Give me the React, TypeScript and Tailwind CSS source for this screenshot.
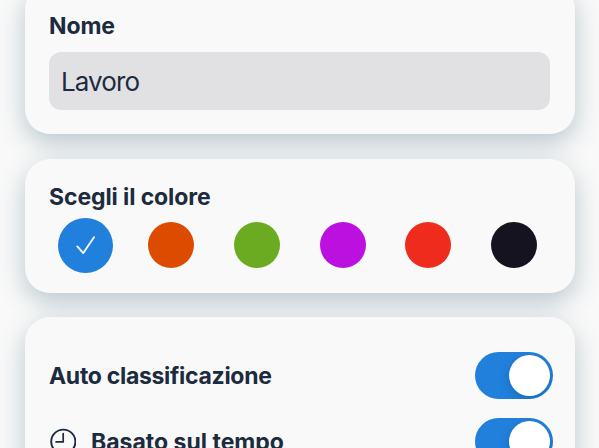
import React from 'react';

interface CardProps {
    className: string;
    children: React.ReactNode;
}

const Card: React.FC<CardProps> = ({ className, children }) => (
    <section
        className={`w-[550px] shrink-0 rounded-[25px] bg-[#f9f9f9] pr-6 pl-[24.5px] shadow-[0_9px_26px_rgba(40,82,102,0.3)] ${className}`}
    >
        {children}
    </section>
);

const Toggle: React.FC<{ label: string }> = ({ label }) => (
    <button
        role="switch"
        aria-checked="true"
        aria-label={label}
        className="flex h-[47px] w-[78px] shrink-0 items-center justify-end overflow-hidden rounded-full bg-[#2080dc] pr-[3px]"
    >
        <span className="size-[41.5px] rounded-full bg-white shadow-[0_3px_10px_rgba(0,0,0,0.17)]" />
    </button>
);

const ClockIcon: React.FC = () => (
    <svg className="size-[27px] shrink-0" viewBox="0 0 27 27" fill="none" stroke="#1c2b3d" strokeWidth="1.9">
        <circle cx="14.3" cy="13.7" r="12.1" />
        <path d="M14.2 5.6v8.3H7.1" strokeWidth="1.7" strokeLinecap="round" strokeLinejoin="round" />
    </svg>
);

const CheckIcon: React.FC = () => (
    <svg className="h-[18px] w-[20px]" viewBox="0 0 20 18" fill="none" stroke="white">
        <path d="M1.3 10.4L7.3 17.1L18 1.2" strokeWidth="1.8" strokeLinecap="round" strokeLinejoin="round" />
    </svg>
);

const colors = ['bg-[#dd4b00]', 'bg-[#6bab21]', 'bg-[#bc10e1]', 'bg-[#ef2b1d]', 'bg-[#151320]'];

const App: React.FC = () => {
    const titleClasses = "text-[23px] leading-7 font-[650] whitespace-nowrap";

    return (
        <main className="flex h-[448px] w-[599px] flex-col items-start gap-[24.7px] overflow-hidden bg-[#f9f9f9] pl-[24.5px] font-['Inter','Liberation_Sans',sans-serif] text-[#1c2b3d]">
            <Card className="-mt-4 h-[150px] pt-7">
                <h2 className={`${titleClasses} tracking-[-0.1px]`}>Nome</h2>
                <div className="mt-3 flex h-[58px] w-[501px] items-center rounded-[12px] bg-[#e1e1e3] pl-3 text-[26px] font-normal tracking-[-0.9px]">
                    Lavoro
                </div>
            </Card>
            <Card className="h-[134px] pt-6">
                <h2 className={`${titleClasses} tracking-[-0.1px]`}>Scegli il colore</h2>
                <div className="mt-[7px] flex h-[55px] items-center pl-[9px]">
                    <div className="mr-[35.4px] flex size-[55px] items-center justify-center rounded-full bg-[#2080dc]">
                        <CheckIcon />
                    </div>
                    <div className="flex gap-[39.65px]">
                        {colors.map(color => (
                            <div key={color} className={`size-[46px] rounded-full ${color}`} />
                        ))}
                    </div>
                </div>
            </Card>
            <Card className="h-[200px] pt-[34.7px] pr-[21.5px]">
                <div className="flex items-center justify-between">
                    <h2 className={`${titleClasses} tracking-[-0.3px]`}>Auto classificazione</h2>
                    <Toggle label="Auto classificazione" />
                </div>
                <div className="mt-[19px] flex items-center">
                    <ClockIcon />
                    <span className={`${titleClasses} ml-[15px]`}>Basato sul tempo</span>
                    <div className="ml-auto">
                        <Toggle label="Basato sul tempo" />
                    </div>
                </div>
            </Card>
        </main>
    );
};

export default App;
